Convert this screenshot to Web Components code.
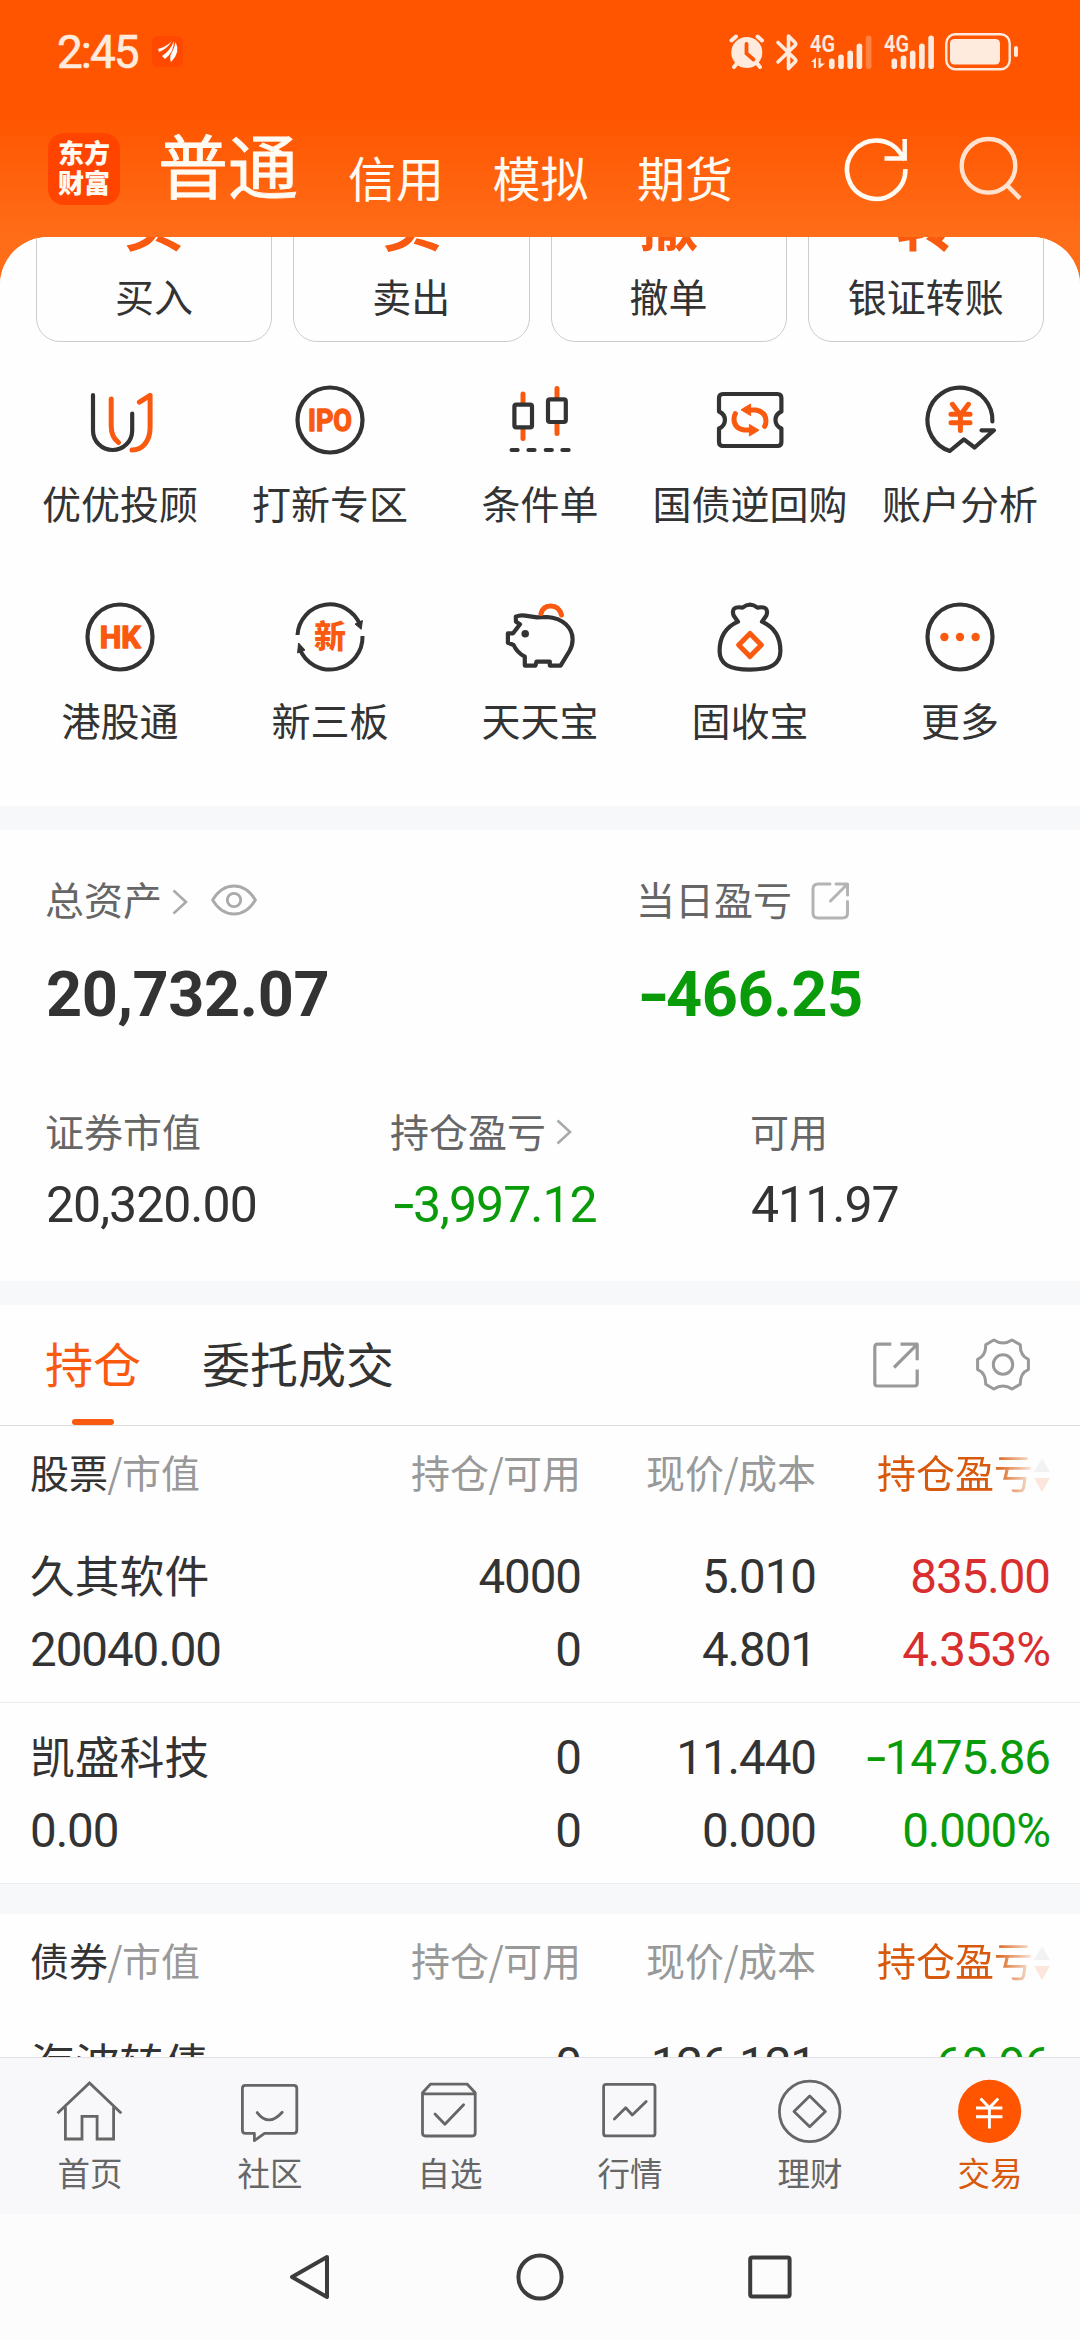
<!DOCTYPE html>
<html lang="zh-CN">
<head>
<meta charset="utf-8">
<title>交易</title>
<style>
html,body{margin:0;padding:0}
body{width:1080px;height:2340px;overflow:hidden;font-family:"Noto Sans CJK SC",sans-serif;color:#333;
--num:Roboto,"Noto Sans CJK SC",sans-serif;--orange:#fa5a0f;--green:#0a9b0a;--red:#d92e2e}
</style>
</head>
<body>
<trade-app></trade-app>
<script>
const define=(name,html)=>{
  const t=document.createElement('template');t.innerHTML=html;
  customElements.define(name,class extends HTMLElement{
    constructor(){super();this.attachShadow({mode:'open'}).append(t.content.cloneNode(true));}
  });
};

/* line icons, all drawn on a 72 unit box unless sized otherwise */
const D='fill="none" stroke="#333" stroke-width="4.2" stroke-linecap="round" stroke-linejoin="round"';
const O='fill="none" stroke="#fa5a0f" stroke-width="5" stroke-linecap="round" stroke-linejoin="round"';
const N='fill="none" stroke="#666" stroke-width="2.8" stroke-linecap="round" stroke-linejoin="round"';
const ICONS={
 advisor:[72,72,`<path ${D} d="M9 11V46.4A19.6 19.6 0 0 0 48.2 46.4V29.5"/><path ${O} d="M27.2 15V42Q27.2 53 34.6 58.6M55.4 18.2L66.1 11.3V43C66.1 58 58 66 48 66"/>`],
 ipo:[72,72,`<circle ${D} cx="36" cy="36" r="32.5"/><text x="36" y="47" text-anchor="middle" textLength="44" lengthAdjust="spacingAndGlyphs" font-family="Roboto" font-weight="700" font-size="31" fill="#fa5a0f" stroke="#fa5a0f" stroke-width="1.4" stroke-linejoin="round">IPO</text>`],
 candle:[72,72,`<path ${O} d="M19 10V19M19 46V54.500M53 4.500V14M53 41V49.500"/><rect ${D} x="10.4" y="20.6" width="17.6" height="22.8" rx="2"/><rect ${D} x="44" y="15.4" width="17.8" height="22.6" rx="2"/><path ${D} d="M7.6 66H13.6M24.5 66H30.5M41.8 66H47.8M58.4 66H64.6"/>`],
 repo:[72,72,`<path ${D} d="M9 10H63.4Q67.4 10 67.4 14V27.5C59.5 31 59.5 41 67.4 44.5V58Q67.4 62 63.4 62H9Q5 62 5 58V44.5C12.9 41 12.9 31 5 27.5V14Q5 10 9 10Z"/><path ${O} d="M34 26H42Q52 28 52 37Q52 40 50.6 42.4M38 46H30Q20 44 20 35Q20 32 21.4 29.6"/><path fill="#fa5a0f" stroke="#fa5a0f" stroke-linejoin="round" d="M27 25.8L36.6 20V31.6ZM45 46.2L35.4 40.4V52Z"/>`],
 account:[72,72,`<path ${D} d="M68.4 37.5A32.5 32.5 0 1 0 25.8 67L39.9 55.3L50.6 63.5L70 46.3H57.5"/><path ${O} d="M28.4 20.3L36.4 31L44.4 20.3M36.4 31V46.5M27 30.3H46M27 38.7H46"/>`],
 hk:[72,72,`<circle ${D} cx="36" cy="36" r="32.5"/><text x="36.3" y="47" text-anchor="middle" textLength="41" lengthAdjust="spacingAndGlyphs" font-family="Roboto" font-weight="700" font-size="31" fill="#fa5a0f" stroke="#fa5a0f" stroke-width="1.4" stroke-linejoin="round">HK</text>`],
 neeq:[72,72,`<path fill="none" stroke="#333" stroke-width="4" d="M3.5 34A32.5 32.5 0 0 1 66.2 24M68.5 35A32.5 32.5 0 0 1 5.8 48"/><path fill="#333" stroke="#333" stroke-linejoin="round" d="M68.4 19.5L61 23L67.2 28.3ZM3.6 52L4.6 42L11 49Z"/><text x="36" y="47.2" text-anchor="middle" font-family="Noto Sans CJK SC" font-weight="900" font-size="32" fill="#fa5a0f">新</text>`],
 pig:[72,72,`<path ${D} d="M11.8 15.7Q16 13.8 21 14.6L33 16.4L43 16C59 17 68.6 27 68.6 38.3Q68.6 45 65.5 50L56.6 64.6H45.8V60.6H32.5L31.5 64.6H20.8V55.7Q13 51.5 9.6 44L3.9 41.7V32.3H9.1L16 23.3L12 20.7Z"/><path ${O} d="M37 12.5Q39 4.9 47 4.9T57.500 14"/><circle cx="21.2" cy="32.7" r="3.8" fill="#333"/>`],
 bag:[72,72,`<path ${D} d="M24 20.7C12 26 5.6 36 5.6 50C5.6 63 15 68.6 36 68.6S66.4 63 66.4 50C66.4 36 60 26 48 20.7L52.4 14.5Q55.5 4.5 43.5 6.6Q36 .6 28.5 6.6Q16.5 4.5 19.6 14.5Z"/><path ${O} d="M36 32.4L47.3 44L36 55.6L24.7 44Z"/>`],
 more:[72,72,`<circle ${D} cx="36" cy="36" r="32.5"/><g fill="#fa5a0f"><circle cx="20.4" cy="36" r="4.2"/><circle cx="36" cy="36" r="4.2"/><circle cx="51.6" cy="36" r="4.2"/></g>`],
 home:[72,72,`<path fill="none" stroke="#666" stroke-width="2.8" d="M3.5 38.2L35.5 8L67.3 38.2M11.4 32V64H28V41.3H43.1V64H59.6V32"/>`],
 social:[72,72,`<path ${N} d="M11.4 10.3H59.8Q62.8 10.3 62.8 13.3V55.3Q62.8 58.3 59.8 58.3H30.5L20.4 65.6V58.3H11.4Q8.4 58.3 8.4 55.3V13.3Q8.4 10.3 11.4 10.3Z"/><path ${N} d="M23.2 37.6Q34.5 52.5 48.2 37.2"/>`],
 watch:[72,72,`<path ${N} d="M8.5 18.8H61.2V58Q61.2 61 58.2 61H11.5Q8.5 61 8.5 58V17.7L16.4 9.2H53.3L61.2 17.7V20M21 39L30.9 49.3L49.6 29.8"/>`],
 quote:[72,72,`<rect ${N} x="9.6" y="9.3" width="51.4" height="51.6" rx="2.5"/><path ${N} d="M20.4 44L31.7 32.8L38.3 40L52.2 26.4"/>`],
 wealth:[72,72,`<circle ${N} cx="35.7" cy="36.4" r="30.3"/><path ${N} d="M35.7 21L51.4 36.4L35.7 51.8L20 36.4Z"/>`],
 trade:[72,72,`<circle cx="35.6" cy="36.4" r="31.6" fill="#ff5500"/><path fill="none" stroke="#fff" stroke-width="2.9" d="M26.6 23.5L35.4 32.8L44.2 23.5M22 33H48.4M22 41.7H48.4M35.4 32V53.5"/>`],
 share:[46,46,`<path fill="none" stroke="currentColor" stroke-width="3.2" stroke-linejoin="round" d="M18.3 2.2H4.5Q1.8 2.2 1.8 5V41.2Q1.8 44 4.5 44H41.5Q44.2 44 44.2 41.2V27.5M27.5 2.2H44.2V18.3M43.6 2.8L21 25.5"/>`],
 'share-soft':[38,38,`<path fill="none" stroke="#b4b4b4" stroke-width="3" stroke-linejoin="round" stroke-linecap="round" d="M19 2H7Q2 2 2 7V31Q2 36 7 36H31.500Q36.500 36 36.500 31V19.500M25 2H36.500V13M36 2.500L19.500 19"/>`],
 gear:[54,54,`<path fill="none" stroke="#999" stroke-width="3" stroke-linejoin="round" d="M17.8 2Q27 8 36 2L44.3 6.8Q44 18 52.4 21.4V31.6Q44 35 44.3 46.2L36 51Q27 45 17.8 51L9.7 46.2Q10 35 1.6 31.6V21.4Q10 18 9.7 6.8Z"/><circle cx="27" cy="26.5" r="9.7" fill="none" stroke="#999" stroke-width="3"/>`],
 eye:[46,32,`<path fill="none" stroke="#aaa" stroke-width="2.8" d="M1.6 16Q10 2 23 2T44.4 16Q36 30 23 30T1.6 16Z"/><circle cx="23" cy="16" r="6.7" fill="none" stroke="#aaa" stroke-width="2.8"/>`],
 chevron:[16,26,`<path fill="none" stroke="#aaa" stroke-width="2.6" d="M1.5 1.5L14 13L1.5 24.5"/>`],
 refresh:[64,64,`<path fill="none" stroke="#fffaf2" stroke-width="4.500" d="M60.4 32A29.2 29.2 0 1 1 55.5 16.5L60 23M59.7 2V21.500H39.500"/>`],
 search:[64,64,`<g fill="none" stroke="#ffe3d0" stroke-width="4.4"><circle cx="29.5" cy="28.8" r="26.8"/><path d="M48.2 48.4L61 61.4"/></g>`],
 sort:[16,36,`<path d="M8 1L16 15H0Z" fill="#999" opacity=".8"/><path d="M8 35L16 21H0Z" fill="#fa5a0f"/>`],
 alarm:[38,38,`<g fill="none" stroke="#ffeade" stroke-width="4" stroke-linecap="round"><path d="M3.5 7.5L8 3.5M34 7.5L29.5 3.5M8.500 31L6 34M29.500 31L32 34"/></g><circle cx="18.800" cy="19.500" r="15.500" fill="#ffeade"/><path d="M18.500 11V20.500L25.500 26.500" fill="none" stroke="#ff5500" stroke-width="3.800" stroke-linecap="round"/>`],
 bluetooth:[24,38,`<path fill="none" stroke="#ffeade" stroke-width="3.600" stroke-linejoin="round" stroke-linecap="round" d="M3 9.500L20 26Q21.500 27.500 20 29L13.500 35.500V23M13.500 15V3L20 9.500Q21.500 11 20 12.500L3 29"/>`],
 battery:[74,38,`<rect x="1.300" y="1.300" width="63.400" height="35" rx="9" fill="none" stroke="#ffeade" stroke-width="2.400"/><rect x="5" y="6" width="50" height="25.500" rx="4.500" fill="#ffeade"/><rect x="69" y="13" width="4" height="11" rx="2" fill="#ffeade"/>`],
 feather:[22,24,`<g fill="#fff"><path d="M1 9Q9 7 15 1Q10 9 2 12Z"/><path d="M5 16Q13 11 17 1Q17 12 8 19Z"/><path d="M14 22Q12 17 15 12Q18 7 18.500 2Q24 12 14 22Z"/></g>`],
 back:[48,50,`<path fill="none" stroke="#3c3c3c" stroke-width="4" stroke-linejoin="round" d="M40 5L5 25L40 45Z"/>`],
 circle:[48,50,`<circle cx="24" cy="25" r="21.600" fill="none" stroke="#3c3c3c" stroke-width="4"/>`],
 recent:[48,50,`<rect x="4.200" y="5.600" width="39.400" height="38.800" rx="2" fill="none" stroke="#3c3c3c" stroke-width="4"/>`]
};
customElements.define('ui-icon',class extends HTMLElement{
  constructor(){super();this.attachShadow({mode:'open'});}
  connectedCallback(){
    const [w,h,body]=ICONS[this.getAttribute('name')];
    this.shadowRoot.innerHTML=`<style>:host{display:block;flex:none}svg{display:block;overflow:visible}</style><svg width="${w}" height="${h}" viewBox="0 0 ${w} ${h}">${body}</svg>`;
  }
});

/* mobile signal: five bars under a small network label */
customElements.define('cell-signal',class extends HTMLElement{
  constructor(){super();this.attachShadow({mode:'open'});}
  connectedCallback(){
    const x0=+this.getAttribute('start'),dim=this.hasAttribute('weak'),tops=[23,dim?19:20,15,8,0];
    const bars=tops.map((t,i)=>`<rect x="${x0+i*9.2}" y="${t+.5}" width="5.600" height="${33.500-t}" rx="2.800" ${dim&&i==4?'opacity=".3"':''}/>`).join('');
    const arrows=dim?'<path d="M1 27L6 22.500V33H3.800V27ZM8.500 23H10.700V28.500H15L9.800 33H8.500Z"/>':'';
    this.shadowRoot.innerHTML=`<style>:host{display:block}svg{display:block;overflow:visible}</style><svg width="${x0+43}" height="34" fill="#ffeade"><text x="0" y="17" textLength="25" lengthAdjust="spacingAndGlyphs" font-family="Roboto" font-weight="600" font-size="23">4G</text>${arrows}${bars}</svg>`;
  }
});

define('status-bar',`<style>
:host{display:flex;align-items:center;height:103px;padding:0 61px 0 57px;color:#ffeade;box-sizing:border-box}
.time{font:400 46px/50px Roboto;letter-spacing:-2px;width:95px;-webkit-text-stroke:.6px #ffeade}
.app{width:31px;height:31px;border-radius:6px;background:#ff4800;display:flex;align-items:center;justify-content:center}
.sys{margin-left:auto;display:flex;align-items:center}
</style><span class="time">2:45</span><span class="app"><ui-icon name="feather"></ui-icon></span>
<div class="sys"><ui-icon name="alarm"></ui-icon><ui-icon name="bluetooth" style="margin-left:9px"></ui-icon><cell-signal weak start="19" style="margin-left:11px"></cell-signal><cell-signal start="7.500" style="margin-left:12px"></cell-signal><ui-icon name="battery" style="margin-left:11px"></ui-icon></div>`);

define('app-header',`<style>
:host{display:flex;height:134px;padding:30px 57px 0 48px;box-sizing:border-box;align-items:flex-start;color:#fffaf2}
.logo{width:72px;height:72px;border-radius:16px;background:#ff4400;box-sizing:border-box;padding:4px 0 0;text-align:center;font-weight:900;font-size:26px;line-height:30px;flex:none}
.cur{font-size:70px;line-height:72px;margin:-5px 0 0 38px;-webkit-text-stroke:.8px #fffaf2}
nav{display:flex;gap:48.500px;margin:18px 0 0 50px;font-size:48px;line-height:50px}
.act{margin-left:auto;display:flex;gap:50px;margin-top:4px}
</style><div class="logo">东方<br>财富</div><div class="cur">普通</div><nav><span>信用</span><span>模拟</span><span>期货</span></nav>
<div class="act"><ui-icon name="refresh"></ui-icon><ui-icon name="search"></ui-icon></div>`);

define('action-card',`<style>
:host{display:flex;flex-direction:column;align-items:center;justify-content:flex-end;flex:1;height:182px;box-sizing:border-box;border:1px solid #ccc;border-radius:24px;padding-bottom:26px}
.g{font-size:60px;line-height:60px;font-weight:700;color:var(--orange);margin-bottom:25px}
.l{font-size:39px;line-height:40px}
</style><span class="g"><slot name="glyph"></slot></span><span class="l"><slot></slot></span>`);

customElements.define('grid-entry',class extends HTMLElement{
  constructor(){super();this.attachShadow({mode:'open'});}
  connectedCallback(){this.shadowRoot.innerHTML=`<style>:host{display:flex;flex-direction:column;align-items:center;gap:26px;font-size:39px;line-height:40px;white-space:nowrap}</style><ui-icon name="${this.getAttribute('icon')}"></ui-icon><span><slot></slot></span>`;}
});

define('trade-actions',`<style>
:host{display:block;background:#fefefe;height:569px;overflow:hidden}
.cards{display:flex;gap:21px;padding:0 36px;margin-top:-77px}
.grid{display:grid;grid-template-columns:repeat(5,210px);justify-content:center;row-gap:79px;margin-top:42px}
</style><div class="cards">
<action-card><span slot="glyph">买</span>买入</action-card><action-card><span slot="glyph">卖</span>卖出</action-card><action-card><span slot="glyph">撤</span>撤单</action-card><action-card><span slot="glyph">转</span>银证转账</action-card></div>
<div class="grid"><grid-entry icon="advisor">优优投顾</grid-entry><grid-entry icon="ipo">打新专区</grid-entry><grid-entry icon="candle">条件单</grid-entry><grid-entry icon="repo">国债逆回购</grid-entry><grid-entry icon="account">账户分析</grid-entry>
<grid-entry icon="hk">港股通</grid-entry><grid-entry icon="neeq">新三板</grid-entry><grid-entry icon="pig">天天宝</grid-entry><grid-entry icon="bag">固收宝</grid-entry><grid-entry icon="more">更多</grid-entry></div>`);

define('asset-stat',`<style>
:host{display:block;color:#333}
:host([down]){color:var(--green)}
.l{display:flex;align-items:center;height:40px;font-size:39px;line-height:40px;color:#666;margin-left:-1px}
.v{font:400 50px/50px var(--num);letter-spacing:-1px;height:50px;margin-top:30px;white-space:nowrap}
:host([big]) .v{font-size:63px;line-height:64px;height:64px;font-weight:700;margin-top:45px;letter-spacing:-.4px}
</style><div class="l"><slot name="label"></slot></div><div class="v"><slot></slot></div>`);

/* a wider minus sign than the digit face provides */
define('minus-sign',`<style>:host{display:inline-block;font-family:Inter;line-height:0;transform:scaleX(1.12);transform-origin:0 50%}</style><slot></slot>`);

define('asset-summary',`<style>
:host{display:block;background:#fefefe;height:451px;box-sizing:border-box;padding:48px 0 0 46px}
.a{display:grid;grid-template-columns:591px 1fr}
.b{display:grid;grid-template-columns:345px 360px 1fr;margin-top:83px}
</style><div class="a"><asset-stat big><span slot="label">总资产</span><ui-icon slot="label" name="chevron" style="margin:7px 0 0 10px"></ui-icon><ui-icon slot="label" name="eye" style="margin:3px 0 0 23px"></ui-icon>20,732.07</asset-stat>
<asset-stat big down><span slot="label">当日盈亏</span><ui-icon slot="label" name="share-soft" style="margin:6px 0 0 19px"></ui-icon><minus-sign>-</minus-sign>466.25</asset-stat></div>
<div class="b"><asset-stat><span slot="label">证券市值</span>20,320.00</asset-stat><asset-stat down><span slot="label">持仓盈亏</span><ui-icon slot="label" name="chevron" style="margin:3px 0 0 10px"></ui-icon><minus-sign>-</minus-sign>3,997.12</asset-stat><asset-stat><span slot="label">可用</span>411.97</asset-stat></div>`);

define('holding-tabs',`<style>
:host{display:flex;align-items:center;height:121px;box-sizing:border-box;border-bottom:1px solid #ddd;padding:0 50px 0 45px;font-size:48px;background:#fefefe}
span{display:flex;flex-direction:column;align-items:center;justify-content:space-between;height:120px;box-sizing:border-box;padding-top:32px;line-height:50px}
.on{color:var(--orange);margin-right:61px}
.on::after{content:"";width:42px;height:6px;border-radius:3px;background:var(--orange)}
.r{margin-left:auto;display:flex;align-items:center;gap:57px;color:#999}
</style><span class="on">持仓</span><span>委托成交</span><div class="r"><ui-icon name="share"></ui-icon><ui-icon name="gear"></ui-icon></div>`);

define('holding-head',`<style>
:host{display:grid;grid-template-columns:331px 220px 235px 234px;padding-left:30px;height:96px;box-sizing:border-box;font-size:39px;line-height:91px;color:#999;background:#fefefe;white-space:nowrap}
b{font-weight:400;color:#333}i{font-style:normal;margin:0 -.700px}
.r{text-align:right}
.p{display:flex;justify-content:flex-end;align-items:center;height:91px;color:#d8590c;-webkit-mask-image:linear-gradient(90deg,#000 178px,rgba(0,0,0,.14) 216px);mask-image:linear-gradient(90deg,#000 178px,rgba(0,0,0,.14) 216px)}
.p ui-icon{margin:6px 0 0 1px}
</style><div><b><slot></slot></b><i>/</i>市值</div><div class="r">持仓<i>/</i>可用</div><div class="r">现价<i>/</i>成本</div><div class="p">持仓盈亏<ui-icon name="sort"></ui-icon></div>`);

define('holding-row',`<style>
:host{display:grid;grid-template-columns:331px 220px 235px 234px;grid-template-rows:73px 73px;padding:19px 0 0 30px;height:181px;box-sizing:border-box;border-bottom:1px solid #eaecef;background:#fefefe;font:400 47.500px/73px var(--num);letter-spacing:-1.050px;white-space:nowrap}
::slotted(*){text-align:right}
::slotted([slot=name]){text-align:left;font:400 44.800px/73px "Noto Sans CJK SC",sans-serif;letter-spacing:0;margin-top:-4px}
::slotted([slot=value]){text-align:left}
:host([up]) ::slotted(.pl){color:var(--red)}
:host([down]) ::slotted(.pl){color:var(--green)}
</style><slot name="name"></slot><slot name="top"></slot><slot name="value"></slot><slot name="bottom"></slot>`);

define('holding-list',`<style>:host{display:block}.gap{height:30px}</style>
<holding-tabs></holding-tabs>
<holding-head>股票</holding-head>
<holding-row up><span slot="name">久其软件</span><span slot="top">4000</span><span slot="top">5.010</span><span slot="top" class="pl">835.00</span><span slot="value">20040.00</span><span slot="bottom">0</span><span slot="bottom">4.801</span><span slot="bottom" class="pl">4.353%</span></holding-row>
<holding-row down><span slot="name">凯盛科技</span><span slot="top">0</span><span slot="top">11.440</span><span slot="top" class="pl"><minus-sign>-</minus-sign>1475.86</span><span slot="value">0.00</span><span slot="bottom">0</span><span slot="bottom">0.000</span><span slot="bottom" class="pl">0.000%</span></holding-row>
<div class="gap"></div>
<holding-head>债券</holding-head>
<holding-row down><span slot="name">海波转债</span><span slot="top">0</span><span slot="top">126.121</span><span slot="top" class="pl"><minus-sign>-</minus-sign>60.96</span></holding-row>`);

customElements.define('tab-item',class extends HTMLElement{
  constructor(){super();this.attachShadow({mode:'open'});}
  connectedCallback(){this.shadowRoot.innerHTML=`<style>:host{display:flex;flex-direction:column;align-items:center;flex:1;font-size:32.500px;line-height:34px;gap:8px;color:#666}:host([on]){color:#d8590c}</style><ui-icon name="${this.getAttribute('icon')}"></ui-icon><span><slot></slot></span>`;}
});
define('tab-bar',`<style>:host{display:flex;height:157px;box-sizing:border-box;border-top:1px solid #e0e2e5;background:#f8f8fa;padding-top:17px}</style>
<tab-item icon="home">首页</tab-item><tab-item icon="social">社区</tab-item><tab-item icon="watch">自选</tab-item><tab-item icon="quote">行情</tab-item><tab-item icon="wealth">理财</tab-item><tab-item icon="trade" on>交易</tab-item>`);
define('system-nav',`<style>:host{display:flex;justify-content:center;gap:181.500px;height:126px;align-items:center;background:#fcfcfc}</style><ui-icon name="back"></ui-icon><ui-icon name="circle"></ui-icon><ui-icon name="recent"></ui-icon>`);

define('trade-app',`<style>
:host{display:flex;flex-direction:column;width:1080px;height:2340px;background:linear-gradient(#ff5500 115px,#ff6d18 237px)}
main{flex:1;min-height:0;overflow:hidden;border-radius:48px 48px 0 0;background:#f7f8fa;display:flex;flex-direction:column;gap:24px}
main>*{flex:none}
</style><status-bar></status-bar><app-header></app-header><main><trade-actions></trade-actions><asset-summary></asset-summary><holding-list></holding-list></main><tab-bar></tab-bar><system-nav></system-nav>`);
</script>
</body>
</html>
